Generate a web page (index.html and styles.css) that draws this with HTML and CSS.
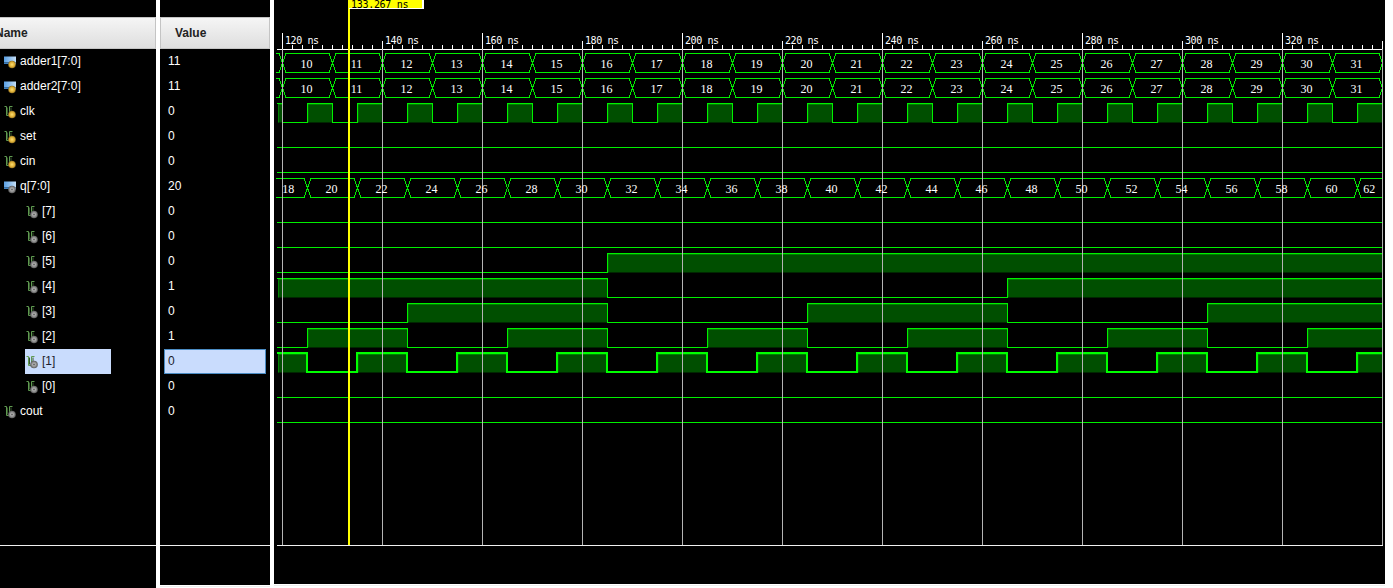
FILE: index.html
```html
<!DOCTYPE html>
<html lang="en">
<head>
    <meta charset="UTF-8">
    <title>Simulation waveform</title>
    <link rel="stylesheet" href="styles.css">
</head>
<body>
    <svg class="icon-defs" width="0" height="0">
        <defs>
            <linearGradient id="busBlue" x1="0" x2="1" y1="0" y2="0">
                <stop offset="0" stop-color="#5aa0e4"/>
                <stop offset="1" stop-color="#c4def6"/>
            </linearGradient>
            <radialGradient id="lockDot">
                <stop offset="0" stop-color="#ffe070"/>
                <stop offset="0.7" stop-color="#d8a830"/>
                <stop offset="1" stop-color="#806420"/>
            </radialGradient>
            <radialGradient id="gearDot">
                <stop offset="0" stop-color="#444"/>
                <stop offset="0.35" stop-color="#b0b0b0"/>
                <stop offset="1" stop-color="#585858"/>
            </radialGradient>
        </defs>
        <symbol id="dotLock" viewBox="0 0 14 14">
            <circle cx="8" cy="9.5" r="3.8" fill="url(#lockDot)"/>
        </symbol>
        <symbol id="dotGear" viewBox="0 0 14 14">
            <circle cx="8" cy="9.5" r="3.8" fill="url(#gearDot)"/>
        </symbol>
        <symbol id="busWave" viewBox="0 0 14 14">
            <rect x="0" y="1.5" width="12" height="6" fill="url(#busBlue)"/>
            <rect x="0" y="7.5" width="5" height="1.5" fill="#3c80c0"/>
            <rect x="9.5" y="7.5" width="2.5" height="2" fill="#8fb4d4"/>
        </symbol>
        <symbol id="bitWave" viewBox="0 0 14 14">
            <path d="M0.5 1.5H2.5V10.5H5.5V1.5H8.5" fill="none" stroke="#5f9a50" stroke-width="1"/>
            <path d="M3.5 2.5V9.5M7 2.5V6" fill="none" stroke="#38582f" stroke-width="1"/>
        </symbol>
    </svg>

    <div class="panel name-panel">
        <div class="col-header name-header">Name</div>
        <div class="rows">
            <div class="row"><span class="signal"><svg class="icon"><use href="#busWave"/><use href="#dotLock"/></svg>adder1[7:0]</span></div>
            <div class="row"><span class="signal"><svg class="icon"><use href="#busWave"/><use href="#dotLock"/></svg>adder2[7:0]</span></div>
            <div class="row"><span class="signal"><svg class="icon"><use href="#bitWave"/><use href="#dotLock"/></svg>clk</span></div>
            <div class="row"><span class="signal"><svg class="icon"><use href="#bitWave"/><use href="#dotLock"/></svg>set</span></div>
            <div class="row"><span class="signal"><svg class="icon"><use href="#bitWave"/><use href="#dotLock"/></svg>cin</span></div>
            <div class="row"><span class="signal"><svg class="icon"><use href="#busWave"/><use href="#dotGear"/></svg>q[7:0]</span></div>
            <div class="row child"><span class="signal"><svg class="icon"><use href="#bitWave"/><use href="#dotGear"/></svg>[7]</span></div>
            <div class="row child"><span class="signal"><svg class="icon"><use href="#bitWave"/><use href="#dotGear"/></svg>[6]</span></div>
            <div class="row child"><span class="signal"><svg class="icon"><use href="#bitWave"/><use href="#dotGear"/></svg>[5]</span></div>
            <div class="row child"><span class="signal"><svg class="icon"><use href="#bitWave"/><use href="#dotGear"/></svg>[4]</span></div>
            <div class="row child"><span class="signal"><svg class="icon"><use href="#bitWave"/><use href="#dotGear"/></svg>[3]</span></div>
            <div class="row child"><span class="signal"><svg class="icon"><use href="#bitWave"/><use href="#dotGear"/></svg>[2]</span></div>
            <div class="row child"><span class="signal selected"><svg class="icon"><use href="#bitWave"/><use href="#dotGear"/></svg>[1]</span></div>
            <div class="row child"><span class="signal"><svg class="icon"><use href="#bitWave"/><use href="#dotGear"/></svg>[0]</span></div>
            <div class="row"><span class="signal"><svg class="icon"><use href="#bitWave"/><use href="#dotGear"/></svg>cout</span></div>
        </div>
    </div>

    <div class="panel value-panel">
        <div class="col-header value-header">Value</div>
        <div class="rows">
            <div class="row value">11</div>
            <div class="row value">11</div>
            <div class="row value">0</div>
            <div class="row value">0</div>
            <div class="row value">0</div>
            <div class="row value">20</div>
            <div class="row value">0</div>
            <div class="row value">0</div>
            <div class="row value">0</div>
            <div class="row value">1</div>
            <div class="row value">0</div>
            <div class="row value">1</div>
            <div class="row value selected">0</div>
            <div class="row value">0</div>
            <div class="row value">0</div>
        </div>
    </div>

    <div class="panel wave-panel" id="wavePanel"></div>

    <script src="wave.js"></script>
</body>
</html>
```

FILE: styles.css
```css
html, body {
    margin: 0;
    height: 100%;
    overflow: hidden;
}
body {
    display: flex;
    gap: 4px;
    align-items: flex-start;
    background-color: #fff;
    font-family: "Liberation Sans", Arial, sans-serif;
    font-size: 12px;
}
.icon-defs {
    position: absolute;
}
.panel {
    background-color: #000;
    color: #fff;
    box-sizing: border-box;
}
.name-panel {
    width: 156px;
    height: 588px;
    padding-top: 17px;
    overflow: hidden;
}
.value-panel {
    width: 110px;
    height: 585px;
    padding-top: 17px;
    box-shadow: 0 1px 0 #fff, 0 2px 0 #eee;
}
.wave-panel {
    width: 1111px;
    height: 584px;
    box-shadow: 0 1px 0 #fff, 0 2px 0 #eee;
}
.wave-panel svg {
    display: block;
}
.col-header {
    height: 32px;
    box-sizing: border-box;
    border: 1px solid #c4c4c4;
    background: linear-gradient(#f5f5f5, #dedede);
    color: #222;
    font-weight: bold;
    line-height: 31px;
}
.name-header {
    margin-left: -6px;
}
.value-header {
    padding-left: 14px;
}
.rows {
    height: 497px;
    box-sizing: border-box;
    border-bottom: 1px solid #f0f0f0;
}
.row {
    height: 25px;
    line-height: 25px;
    box-sizing: border-box;
    padding-left: 4px;
}
.row.child {
    padding-left: 25px;
}
.signal {
    display: flex;
    align-items: center;
    height: 25px;
}
.icon {
    width: 14px;
    height: 14px;
    margin-right: 2px;
    flex: none;
}
.child .signal {
    padding-left: 1px;
}
.signal.selected {
    width: 85px;
    background-color: #c9dcfd;
    color: #1c1c2c;
}
.row.value {
    padding-left: 8px;
}
.row.value.selected {
    width: 102px;
    margin-left: 4px;
    padding-left: 3px;
    line-height: 23px;
    border: 1px solid #4b8cc4;
    background-color: #c9dcfd;
    color: #1c1c2c;
}
.tick-label {
    font-family: "DejaVu Sans Mono", monospace;
    font-size: 10px;
    letter-spacing: -0.4px;
    fill: #fff;
}
.bus-label {
    font-family: "Liberation Serif", serif;
    font-size: 12px;
    fill: #fff;
    text-anchor: middle;
}
.cursor-label {
    font-family: "DejaVu Sans Mono", monospace;
    font-size: 10px;
    letter-spacing: -0.3px;
    fill: #000;
}
```

FILE: wave.js
```js
// Builds the waveform canvas. The wave panel starts at x=274 on the page,
// everything below is in page coordinates and shifted by a viewBox.
const PANEL_LEFT = 274;
const LEFT = 277;
const RIGHT = 1383;
const ROW_TOP = 49;
const ROW_H = 25;
const FOOT_Y = 545;
const GREEN = '#00f000';
const FILL = '#004f00';
const EDGE = '#00a000';

// 120 ns sits on x=282.5, 5px for each ns
function nsToX(ns) {
    return 282.5 + (ns - 120) * 5;
}

const parts = [];
const labels = [];

function busRow(row, first, step, startNs) {
    const top = ROW_TOP + row * ROW_H + 4.5;
    const bot = top + 19;
    let val = first;
    for (let ns = startNs; nsToX(ns) < RIGHT; ns += 10) {
        const a = nsToX(ns);
        const b = nsToX(ns + 10);
        parts.push(`<path d="M${a + 3.5} ${top}H${b - 3.5}L${b + 3.5} ${bot}M${a + 3.5} ${bot}H${b - 3.5}L${b + 3.5} ${top}" fill="none" stroke="${GREEN}" shape-rendering="crispEdges"/>`);
        // segments with no room on screen carry no label
        if (b > LEFT + 8 && a < RIGHT - 8) {
            const cx = (Math.max(a, 271) + Math.min(b, RIGHT)) / 2;
            labels.push(`<text class="bus-label" x="${cx - 1}" y="${bot - 4.5}">${val}</text>`);
        }
        val += step;
    }
}

// edges is a list of [x, level] where the level holds until the next entry
function bitRow(row, edges, selected) {
    const hi = ROW_TOP + row * ROW_H + 4.5;
    const lo = hi + 19;
    let d = '';
    edges.forEach(function (e, i) {
        const x1 = e[0];
        const x2 = i + 1 < edges.length ? edges[i + 1][0] : RIGHT;
        const y = e[1] ? hi : lo;
        d += (i === 0 ? `M${x1} ${y}` : `V${y}`) + `H${x2}`;
        if (e[1]) {
            const fx = Math.max(x1, 278);
            parts.push(`<rect x="${fx}" y="${hi}" width="${x2 - fx}" height="${lo - hi}" fill="${FILL}"/>`);
            parts.push(`<path d="M${fx + 0.5} ${lo}V${hi + 1}H${x2}" fill="none" stroke="${EDGE}" opacity="0.6"/>`);
        }
    });
    // the selected trace is 2px wide, it sits on whole pixels
    const attrs = selected
        ? 'stroke="#00ff00" stroke-width="2" transform="translate(-0.5 -0.5)"'
        : `stroke="${GREEN}"`;
    parts.push(`<path d="${d}" fill="none" ${attrs} shape-rendering="crispEdges"/>`);
}

function flatRow(row) {
    bitRow(row, [[LEFT, 0]], false);
}

function clkEdges() {
    const edges = [[LEFT, 1]];
    for (let ns = 120; nsToX(ns) < RIGHT; ns += 5) {
        edges.push([nsToX(ns), ns % 10 === 0 ? 0 : 1]);
    }
    return edges;
}

// q counts up by 2 every 10ns, it changes on 125, 135, ...
function qBitEdges(bit) {
    const edges = [[LEFT, (18 >> bit) & 1]];
    let q = 18;
    for (let ns = 125; nsToX(ns) < RIGHT; ns += 10) {
        const next = q + 2;
        if (((q ^ next) >> bit) & 1) {
            edges.push([nsToX(ns), (next >> bit) & 1]);
        }
        q = next;
    }
    return edges;
}

function ruler() {
    let d = `M${LEFT} 49.5H${RIGHT}`;
    let i = 0;
    for (let x = 282.5; x < RIGHT; x += 10) {
        if (i % 20 === 0) d += `M${x} 33V49`;
        else if (i % 10 === 0) d += `M${x} 41V49`;
        else d += `M${x} 45V49`;
        i++;
    }
    parts.push(`<path d="${d}" stroke="#fff" fill="none"/>`);
    for (let ns = 120; nsToX(ns) < RIGHT - 50; ns += 20) {
        labels.push(`<text class="tick-label" x="${nsToX(ns) + 2.5}" y="44">${ns} ns</text>`);
    }
}

function gridLines() {
    for (let ns = 120; nsToX(ns) < RIGHT; ns += 20) {
        parts.push(`<path d="M${nsToX(ns)} 49V${FOOT_Y}" stroke="#b4b4b4"/>`);
    }
}

ruler();
busRow(0, 9, 1, 110);
busRow(1, 9, 1, 110);
bitRow(2, clkEdges(), false);
flatRow(3);
flatRow(4);
busRow(5, 18, 2, 115);
[7, 6, 5, 4, 3, 2, 1, 0].forEach(function (bit, i) {
    if (bit > 5 || bit === 0) flatRow(6 + i);
    else bitRow(6 + i, qBitEdges(bit), bit === 1);
});
flatRow(14);
gridLines();

const cursor =
    `<rect x="348" y="0" width="2" height="${FOOT_Y}" fill="#ffff00"/>` +
    `<rect x="349" y="0" width="75" height="9" fill="#fff"/>` +
    `<rect x="349" y="0" width="73" height="8" fill="#ffff00"/>` +
    `<text class="cursor-label" x="351" y="8">133.267 ns</text>`;

document.getElementById('wavePanel').innerHTML =
    `<svg width="1111" height="584" viewBox="${PANEL_LEFT} 0 1111 584">` +
    `<clipPath id="waveClip"><rect x="${LEFT - 1}" y="0" width="${RIGHT - LEFT + 1}" height="${FOOT_Y}"/></clipPath>` +
    `<g clip-path="url(#waveClip)">${parts.join('')}${labels.join('')}</g>` +
    `<path d="M${LEFT} ${FOOT_Y + 0.5}H${RIGHT}" stroke="#f0f0f0"/>` +
    cursor +
    `</svg>`;
```
